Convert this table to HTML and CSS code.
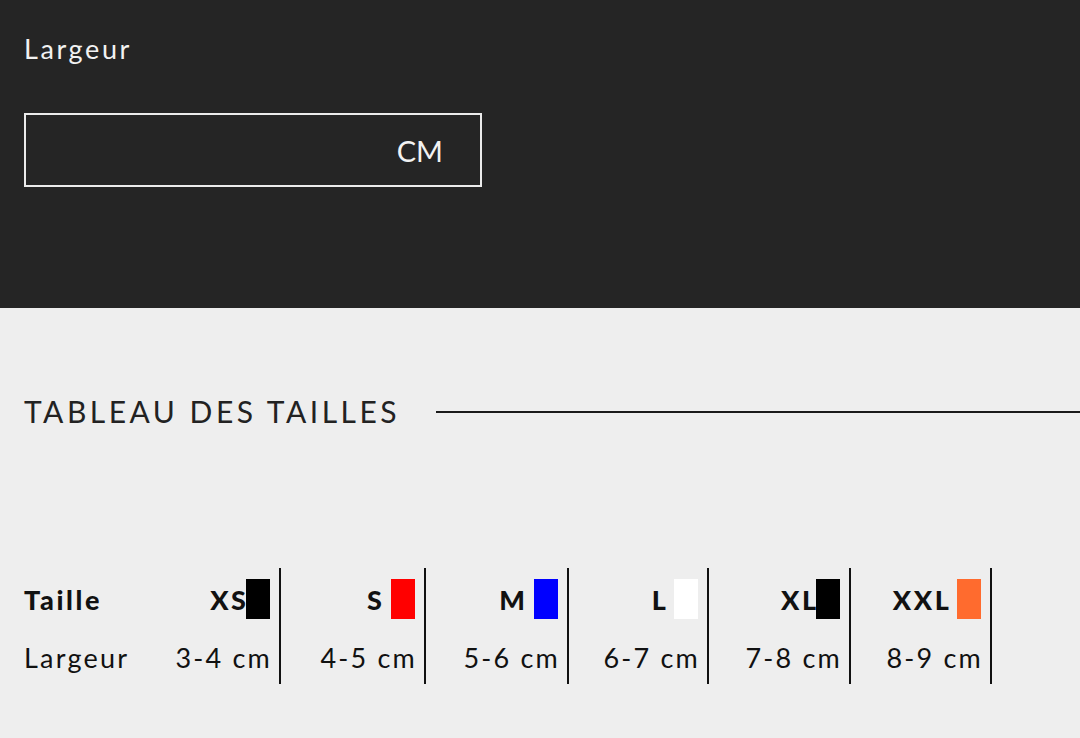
FILE: index.html
```html
<!DOCTYPE html>
<html lang="fr">
<head>
<meta charset="utf-8">
<title>Tableau des tailles</title>
<link rel="stylesheet" href="styles.css">
</head>
<body>
<section class="dark">
  <label class="field-label" for="w">Largeur</label>
  <div class="input-box">
    <input id="w" class="input" type="text" value="">
    <span class="unit">CM</span>
  </div>
</section>
<section class="light">
  <div class="title-row">
    <h2 class="title">TABLEAU DES TAILLES</h2>
    <span class="rule"></span>
  </div>
  <div class="sizes">
    <div class="cell label bold">Taille</div>
    <div class="cell sep bold">XS<span class="sw black"></span></div>
    <div class="cell sep bold">S <span class="sw red"></span></div>
    <div class="cell sep bold">M <span class="sw blue"></span></div>
    <div class="cell sep bold">L <span class="sw white"></span></div>
    <div class="cell sep bold">XL<span class="sw black"></span></div>
    <div class="cell sep bold">XXL <span class="sw orange"></span></div>
    <div class="cell label">Largeur</div>
    <div class="cell sep val">3-4 cm</div>
    <div class="cell sep val">4-5 cm</div>
    <div class="cell sep val">5-6 cm</div>
    <div class="cell sep val">6-7 cm</div>
    <div class="cell sep val">7-8 cm</div>
    <div class="cell sep val">8-9 cm</div>
  </div>
</section>
</body>
</html>
```
FILE: styles.css
```css
* { box-sizing: border-box; }
html, body { margin: 0; padding: 0; }
body {
  font-family: "Lato", "DejaVu Sans", sans-serif;
  width: 1080px;
  height: 738px;
  overflow: hidden;
  background: #eeeeee;
}
.dark {
  background: #252525;
  height: 308px;
  padding: 30px 0 0 24px;
  display: flex;
  flex-direction: column;
}
.field-label {
  color: #f2f2f2;
  font-size: 27px;
  letter-spacing: 2.6px;
  line-height: 38px;
}
.input-box {
  margin-top: 45px;
  width: 458px;
  height: 74px;
  border: 2px solid #ececec;
  display: flex;
  align-items: center;
  justify-content: flex-end;
  padding-right: 37px;
}
.input {
  flex: 1;
  background: transparent;
  border: 0;
  outline: 0;
  color: #fff;
  font: inherit;
}
.unit {
  color: #f2f2f2;
  font-size: 29px;
  letter-spacing: 0;
}
.light {
  padding: 88px 0 0 24px;
}
.title-row {
  display: flex;
  align-items: center;
  gap: 36px;
  height: 30px;
}
.title {
  margin: 0;
  font-weight: 400;
  font-size: 30px;
  letter-spacing: 3.5px;
  color: #222;
  white-space: nowrap;
}
.rule {
  flex: 1;
  height: 2px;
  margin-top: 2px;
  background: #1a1a1a;
}
.sizes {
  margin-top: 142px;
  display: grid;
  grid-template-columns: 136px 121px 145px 143px 140px 142px 141px;
  grid-auto-rows: 58px;
  color: #111;
  font-size: 27px;
  letter-spacing: 2.2px;
}
.cell {
  display: flex;
  align-items: center;
  justify-content: flex-end;
  white-space: pre;
  padding-top: 4px;
}
.cell.label { justify-content: flex-start; }
.cell.sep {
  border-right: 2px solid #111;
  padding-right: 9px;
}
.cell.val { padding-right: 7px; }
.bold { font-weight: 900; letter-spacing: 2.6px; }
.sw {
  display: inline-block;
  width: 24px;
  height: 40px;
  margin-left: -2.6px;
}
.black { background: #000; }
.red { background: #ff0000; }
.blue { background: #0000ff; }
.white { background: #ffffff; }
.orange { background: #ff6b2e; }
```
